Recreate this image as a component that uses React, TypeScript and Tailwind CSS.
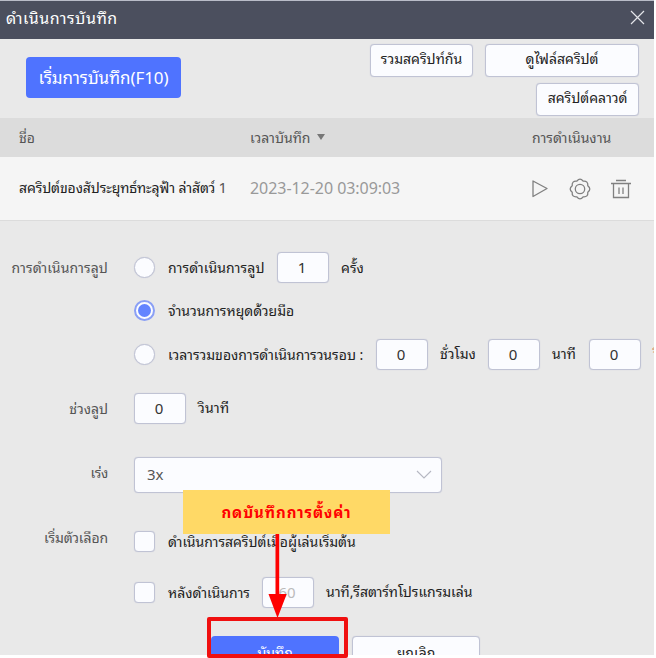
import React from 'react';

type BoxProps = { children?: React.ReactNode; className?: string };

const NumberBox = ({ children, className = '' }: BoxProps) => (
  <div className={`h-[31px] w-[52px] shrink-0 rounded-[4px] border border-[#c0c3d4] bg-[#fbfcff] pr-[2px] text-center text-[15px] leading-[28px] text-[#333] shadow-[0_0_1px_#c0c3d4] ${className}`}>
    {children}
  </div>
);

const Radio = ({ checked = false }: { checked?: boolean }) => (
  <div className={`flex size-[21px] shrink-0 items-center justify-center rounded-full bg-[#fbfcff] ${checked ? 'border-2 border-[#8a9ff5]' : 'border-[1.5px] border-[#c0c3d4] shadow-[0_0_1px_#c0c3d4]'}`}>
    {checked && <div className="size-[13px] rounded-full bg-[#6384ff]" />}
  </div>
);

const Checkbox = () => (
  <div className="size-[21px] shrink-0 rounded-[4px] border border-[#c0c3d4] bg-[#fbfcff] shadow-[0_0_1px_#c0c3d4]" />
);

const FieldLabel = ({ children, className = '' }: BoxProps) => (
  <div className={`mr-[26px] w-[108px] shrink-0 whitespace-nowrap text-right text-[#555] ${className}`}>{children}</div>
);

const ToolButton = ({ children, className = '' }: BoxProps) => (
  <button className={`flex h-[33px] items-center justify-center whitespace-nowrap rounded-[4px] border border-[#c0c3d4] bg-[#fbfcff] shadow-[0_0_1px_#c0c3d4] ${className}`}>
    {children}
  </button>
);

const ScriptActions = () => (
  <svg width="104" height="24" viewBox="0 0 104 24" fill="none" stroke="#808080" strokeWidth="1.3">
    <path d="M4 4 L18 11.5 L4 19.5 Z" strokeLinejoin="round" />
    <g transform="translate(51 12)">
      <path d="M-3.2 -7.8 Q0 -11.8 3.2 -7.8 Q8.3 -8.3 7.8 -3.2 Q11.8 0 7.8 3.2 Q8.3 8.3 3.2 7.8 Q0 11.8 -3.2 7.8 Q-8.3 8.3 -7.8 3.2 Q-11.8 0 -7.8 -3.2 Q-8.3 -8.3 -3.2 -7.8 Z" />
      <circle r="4.7" />
    </g>
    <path d="M82 6.5H102M87 3.5H97M84.5 7V20.5H99.5V7M90 10.5V17M94 10.5V17" />
  </svg>
);

const App = () => {
  return (
    <div className="relative h-[658px] w-[656px] overflow-hidden bg-white font-['Noto_Sans','Noto_Sans_Thai_Looped','Loma','Waree','Noto_Sans_Thai',sans-serif] text-[14px] text-[#222]">
      <div className="h-[655px] w-[654px] overflow-hidden bg-[#e9e9e9]">
        <header className="flex h-[39px] items-center justify-between border-t border-[#b9bcc8] bg-[#4b4f5e] pl-[6px] pr-[9px] text-[16px] tracking-[0.5px] text-white">
          <span className="whitespace-nowrap pb-1">ดำเนินการบันทึก</span>
          <svg width="15" height="15" viewBox="0 0 15 15" className="mb-1.5" stroke="#e4e5ea" strokeWidth="1.2">
            <path d="M1 1L14 14M14 1L1 14" />
          </svg>
        </header>

        <section className="flex h-[79px] items-start justify-between pl-[26px] pr-[15px] pt-[5px]">
          <button className="mt-[13px] h-[41px] w-[155px] whitespace-nowrap rounded-[4px] bg-[#4f73ff] text-[17px] tracking-[-0.1px] text-white">เริ่มการบันทึก(F10)</button>
          <div className="flex w-[270px] flex-wrap justify-end gap-x-[12px] gap-y-[6px]">
            <ToolButton className="w-[103px] pb-1">รวมสคริปท์กัน</ToolButton>
            <ToolButton className="w-[154px] pb-1">ดูไฟล์สคริปต์</ToolButton>
            <ToolButton className="w-[103px] pb-1">สคริปต์คลาวด์</ToolButton>
          </div>
        </section>

        <div className="flex h-[39px] items-center bg-[#dcdcdc] pb-px pl-[19px] text-[#555]">
          <span className="w-[231px]">ชื่อ</span>
          <span className="flex w-[282px] items-center gap-[7px]">
            เวลาบันทึก
            <svg width="8" height="6" viewBox="0 0 8 6" fill="#777"><path d="M0 0H8L4 6Z" /></svg>
          </span>
          <span>การดำเนินงาน</span>
        </div>
        <div className="flex h-[64px] items-center border-b border-[#dcdcdc] bg-[#f5f5f5] pl-[19px]">
          <span className="w-[231px] whitespace-nowrap pb-[2px] tracking-[-0.12px]">สคริปต์ของสัประยุทธ์ทะลุฟ้า ล่าสัตว์ <span className="text-[15px] text-[#555]">1</span></span>
          <span className="w-[279px] pb-px text-[16px] tracking-[-0.05px] text-[#999]">2023-12-20 03:09:03</span>
          <ScriptActions />
        </div>

        <div className="mt-[31px] flex h-[31px] items-center whitespace-nowrap">
          <FieldLabel className="tracking-[0.1px]">การดำเนินการลูป</FieldLabel>
          <Radio />
          <span className="ml-[13px] w-[109px] tracking-[0.1px]">การดำเนินการลูป</span>
          <NumberBox>1</NumberBox>
          <span className="ml-[12px]">ครั้ง</span>
        </div>
        <div className="mt-[12px] flex h-[31px] items-center whitespace-nowrap pl-[134px]">
          <Radio checked />
          <span className="ml-[13px]">จำนวนการหยุดด้วยมือ</span>
        </div>
        <div className="mt-[13px] flex h-[31px] items-center whitespace-nowrap pl-[134px]">
          <Radio />
          <span className="ml-[13px] w-[208px] shrink-0">เวลารวมของการดำเนินการวนรอบ :</span>
          <NumberBox>0</NumberBox>
          <span className="ml-[12px] w-[48px] shrink-0 pb-[2px]">ชั่วโมง</span>
          <NumberBox>0</NumberBox>
          <span className="ml-[12px] w-[37px] shrink-0 pb-[2px]">นาที</span>
          <NumberBox>0</NumberBox>
          <span className="ml-[12px] pb-[2px] text-[#d58b57]">วินาที</span>
        </div>
        <div className="mt-[23px] flex h-[31px] items-center whitespace-nowrap">
          <FieldLabel>ช่วงลูป</FieldLabel>
          <NumberBox>0</NumberBox>
          <span className="ml-[12px] pb-[2px] tracking-[0.2px]">วินาที</span>
        </div>
        <div className="mt-[33px] flex h-[36px] items-center">
          <FieldLabel className="pb-[5px] tracking-[-0.3px]">เร่ง</FieldLabel>
          <div className="flex h-[36px] w-[308px] items-center justify-between rounded-[4px] border border-[#c0c3d4] bg-[#fbfcff] pb-px pl-[12px] pr-[9px] text-[15px] text-[#555] shadow-[0_0_1px_#c0c3d4]">
            3x
            <svg width="16" height="9" viewBox="0 0 16 9" fill="none" stroke="#b5b7c2" strokeWidth="1.1"><path d="M1 1L8 8L15 1" /></svg>
          </div>
        </div>
        <div className="mt-[38px] flex h-[21px] items-center whitespace-nowrap">
          <FieldLabel className="pb-[9px] tracking-[-0.1px]">เริ่มตัวเลือก</FieldLabel>
          <Checkbox />
          <span className="ml-[13px] tracking-[-0.05px]">ดำเนินการสคริปต์เมื่อผู้เล่นเริ่มต้น</span>
        </div>
        <div className="mt-[25px] flex h-[31px] items-center whitespace-nowrap pl-[134px]">
          <Checkbox />
          <span className="ml-[13px] w-[94px]">หลังดำเนินการ</span>
          <NumberBox className="!text-[#bbb]">60</NumberBox>
          <span className="ml-[12px] pb-[2px] tracking-[-0.05px]">นาที,รีสตาร์ทโปรแกรมเล่น</span>
        </div>
        <div className="mt-[28px] flex gap-[13px] pl-[211px]">
          <button className="h-[36px] w-[128px] rounded-[4px] bg-[#4f73ff] pb-[3px] text-white">บันทึก</button>
          <ToolButton className="w-[128px]">ยกเลิก</ToolButton>
        </div>
      </div>

      <div className="absolute left-[183px] top-[490px] flex h-[44px] w-[207px] items-center justify-center whitespace-nowrap bg-[#ffd966] text-[15px] font-bold tracking-[0.9px] text-[#f00]">
        กดบันทึกการตั้งค่า
      </div>
      <svg className="absolute left-[268px] top-[534px]" width="20" height="85" viewBox="0 0 20 85" fill="#fe0000">
        <path d="M7.5 0H11.2V60H18.7L9.5 84L0.5 60H7.5Z" />
      </svg>
      <div className="absolute left-[207px] top-[617px] h-[41px] w-[141px] rounded-[2px] border-4 border-[#f01010]" />
    </div>
  );
};

export default App;
